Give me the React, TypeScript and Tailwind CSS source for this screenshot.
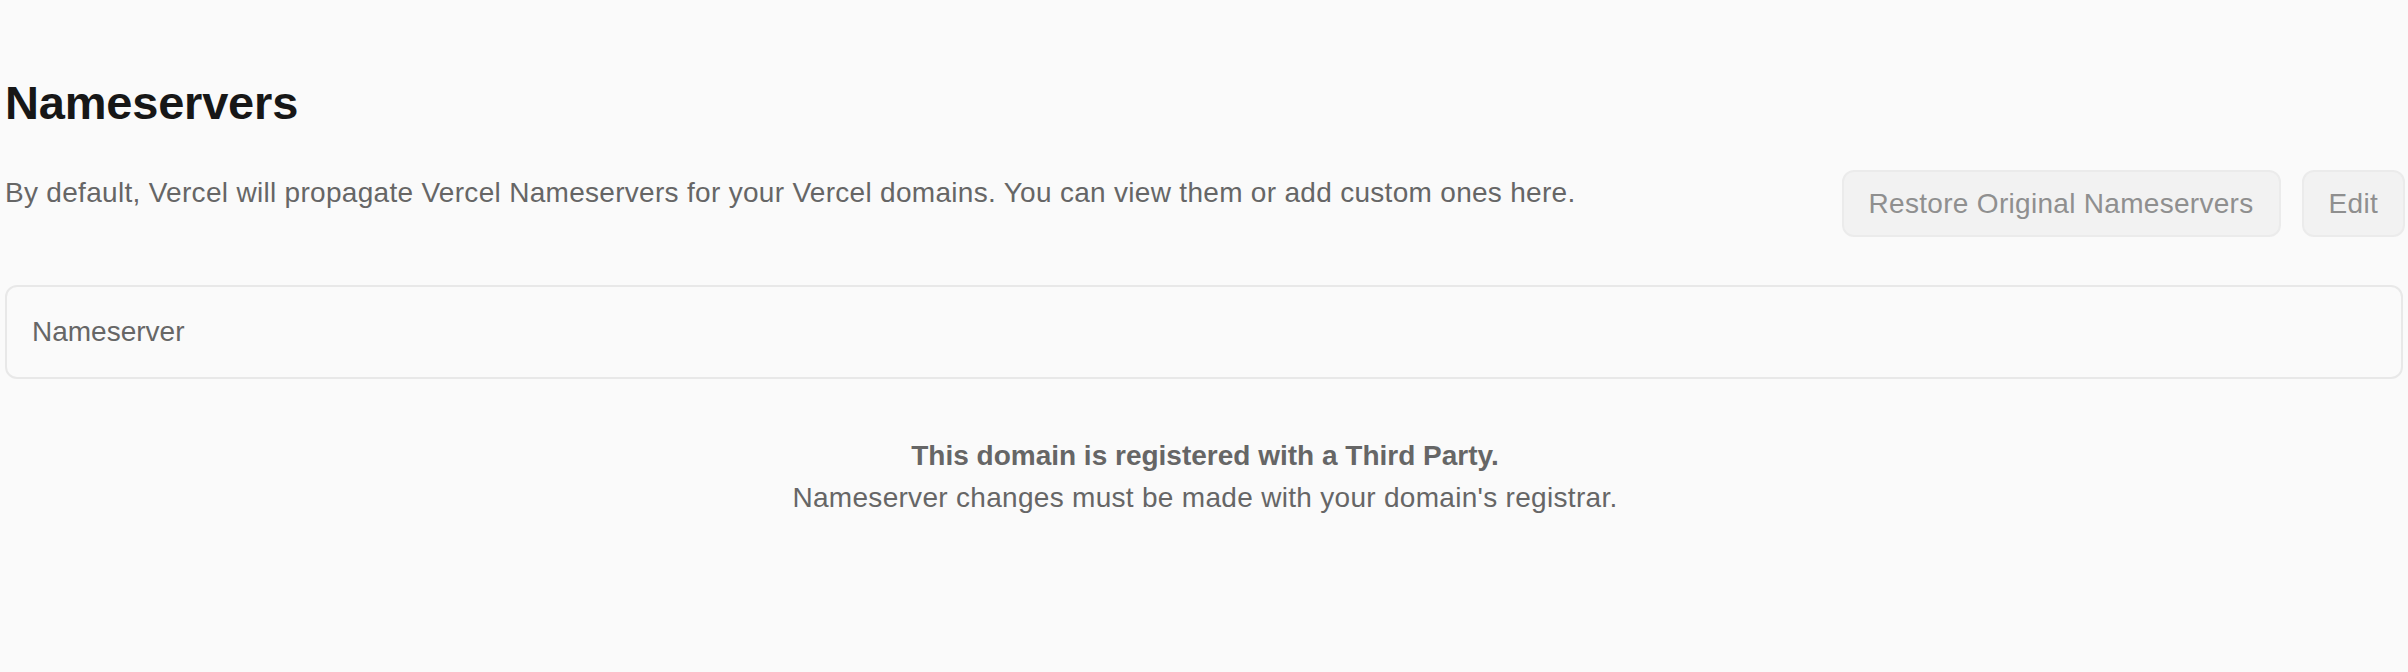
const font = "font-['Liberation_Sans',Arial,sans-serif]";

export default function App() {
  return (
    <div className={`${font} min-h-[672px] w-full bg-[#fafafa] pl-[5px] pr-[3px] pt-[75px]`}>
      <h1 className="text-[47px] leading-[1.2] font-bold tracking-[-0.2px] text-[#171717]">
        Nameservers
      </h1>

      <div className="mt-[39px] flex items-start justify-between">
        <p className="mt-[3px] text-[28px] leading-[40px] tracking-[0.3px] text-[#666666]">
          By default, Vercel will propagate Vercel Nameservers for your Vercel domains. You can view
          them or add custom ones here.
        </p>
        <div className="flex gap-[21px]">
          <button
            disabled
            className="h-[67px] rounded-xl border-2 border-[#ebebeb] bg-[#f2f2f2] px-[25px] text-[28px] tracking-[0.3px] text-[#8f8f8f]"
          >
            Restore Original Nameservers
          </button>
          <button
            disabled
            className="h-[67px] rounded-xl border-2 border-[#ebebeb] bg-[#f2f2f2] px-[25px] text-[28px] tracking-[0.3px] text-[#8f8f8f]"
          >
            Edit
          </button>
        </div>
      </div>

      <div className="mt-[48px] mr-[2px] flex h-[94px] items-center rounded-xl border-2 border-[#e8e8e8] bg-[#fafafa] px-[25px]">
        <span className="text-[28px] text-[#666666]">Nameserver</span>
      </div>

      <div className="mt-[56px] flex flex-col items-center text-[28px] leading-[42px] tracking-[0.3px] text-[#666666]">
        <p className="font-bold tracking-normal">This domain is registered with a Third Party.</p>
        <p>Nameserver changes must be made with your domain's registrar.</p>
      </div>
    </div>
  );
}
